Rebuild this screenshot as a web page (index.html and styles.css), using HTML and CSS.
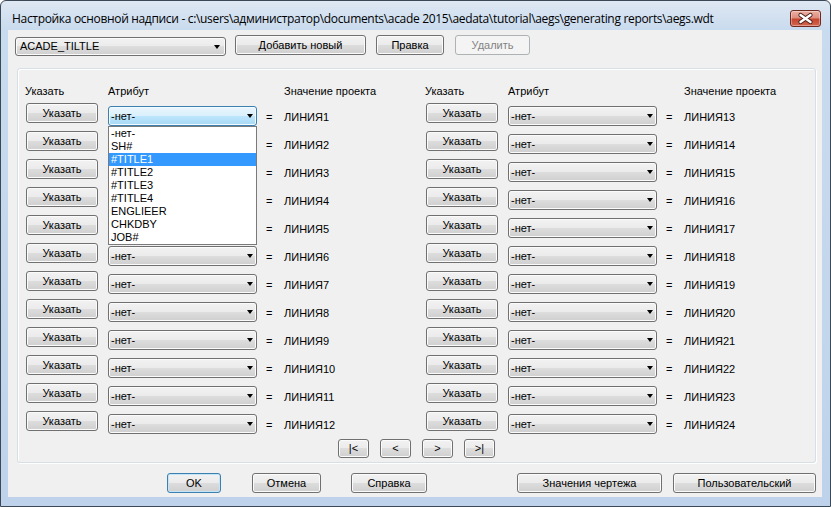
FILE: index.html
```html
<!DOCTYPE html>
<html lang="ru">
<head>
   <meta charset="utf-8">
   <title>Настройка основной надписи</title>
   <link rel="stylesheet" href="styles.css">
</head>
<body>

   <div class="window">
      <div class="titlebar">
         <span class="title">Настройка основной надписи - c:\users\администратор\documents\acade 2015\aedata\tutorial\aegs\generating reports\aegs.wdt</span>
         <div class="close">
            <svg width="29" height="15" viewBox="0 0 29 15">
               <path d="M9.5 4 L19.5 11 M19.5 4 L9.5 11" stroke="#4a1d18" stroke-width="4.2" stroke-linecap="round"/>
               <path d="M9.5 4 L19.5 11 M19.5 4 L9.5 11" stroke="#ffffff" stroke-width="2.4" stroke-linecap="round"/>
            </svg>
         </div>
      </div>

      <div class="client">
         <div class="toolbar">
            <div class="combo combo-main">ACADE_TILTLE</div>
            <button class="btn btn-add">Добавить новый</button>
            <button class="btn btn-edit">Правка</button>
            <button class="btn btn-del" disabled>Удалить</button>
         </div>

         <div class="group">
            <div class="panels">
               <div class="panel" id="left">
                  <div class="head head-pick">Указать</div>
                  <div class="head">Атрибут</div>
                  <div></div>
                  <div class="head">Значение проекта</div>
               </div>
               <div class="panel" id="right">
                  <div class="head head-pick">Указать</div>
                  <div class="head">Атрибут</div>
                  <div></div>
                  <div class="head">Значение проекта</div>
               </div>
            </div>
            <div class="nav">
               <button class="btn nav-btn">|&lt;</button>
               <button class="btn nav-btn">&lt;</button>
               <button class="btn nav-btn">&gt;</button>
               <button class="btn nav-btn">&gt;|</button>
            </div>
         </div>

         <div class="footer">
            <button class="btn btn-ok">OK</button>
            <button class="btn btn-cancel">Отмена</button>
            <button class="btn btn-help">Справка</button>
            <button class="btn btn-draw">Значения чертежа</button>
            <button class="btn btn-user">Пользовательский</button>
         </div>
      </div>
   </div>

   <script type="text/javascript">
      var items = ["-нет-", "SH#", "#TITLE1", "#TITLE2", "#TITLE3", "#TITLE4", "ENGLIEER", "CHKDBY", "JOB#"];

      function addRows(panel, from) {
         for (var i = 0; i < 12; i++) {
            var pick = document.createElement("button");
            pick.className = "btn pick";
            pick.textContent = "Указать";

            var combo = document.createElement("div");
            combo.className = "combo row-combo";
            // combos 2-5 on the left sit under the open list
            if (!(from === 1 && i > 0 && i < 5)) {
               combo.textContent = "-нет-";
            }

            var eq = document.createElement("div");
            eq.className = "eq";
            eq.textContent = "=";

            var val = document.createElement("div");
            val.className = "val";
            val.textContent = "ЛИНИЯ" + (from + i);

            if (from === 1 && i === 0) {
               combo.classList.add("open");
               var list = document.createElement("div");
               list.className = "list";
               items.forEach(function(t, k) {
                  var it = document.createElement("div");
                  it.className = k === 2 ? "item sel" : "item";
                  it.textContent = t;
                  list.appendChild(it);
               });
               combo.appendChild(list);
            }

            panel.appendChild(pick);
            panel.appendChild(combo);
            panel.appendChild(eq);
            panel.appendChild(val);
         }
      }

      addRows(document.getElementById("left"), 1);
      addRows(document.getElementById("right"), 13);
   </script>
</body>
</html>
```

FILE: styles.css
```css
body {
   margin: 0;
   font-family: "Liberation Sans", Arial, sans-serif;
   font-size: 11px;
   background: #ffffff;
}

.window {
   width: 831px;
   height: 507px;
   box-sizing: border-box;
   border: 1px solid #3b4856;
   border-radius: 6px 6px 0 0;
   background: linear-gradient(#dfe8f3 0, #c9dbee 28px, #bed3eb 100%);
   padding: 0 8px 9px 7px;
   display: flex;
   flex-direction: column;
}

.titlebar {
   height: 29px;
   display: flex;
   align-items: flex-start;
}

.title {
   font-family: "Open Sans", "Liberation Sans", sans-serif;
   font-size: 12px;
   line-height: 16px;
   margin: 10px 0 0 4px;
   color: #000;
   letter-spacing: -0.32px;
   white-space: nowrap;
}

.close {
   margin: 9px 1px 0 auto;
   width: 31px;
   height: 17px;
   box-sizing: border-box;
   border: 1px solid #6e2a21;
   border-radius: 3px;
   background: linear-gradient(#ebb0a3 0%, #dd8e7f 45%, #c6452f 55%, #d2674f 100%);
   box-shadow: inset 0 0 0 1px rgba(255, 255, 255, 0.35);
}

.close svg {
   display: block;
}

.client {
   flex: 1;
   background: #f0f0f0;
}

.toolbar {
   display: flex;
   align-items: flex-start;
   height: 25px;
   box-sizing: border-box;
   padding: 5px 0 0 7px;
}

.btn {
   box-sizing: border-box;
   height: 20px;
   padding: 0;
   border: 1px solid #707070;
   border-radius: 3px;
   background: linear-gradient(#f2f2f2 0%, #ebebeb 50%, #dddddd 50%, #cfcfcf 100%);
   box-shadow: inset 0 0 0 1px #fbfbfb;
   font-family: "Liberation Sans", Arial, sans-serif;
   font-size: 11px;
   line-height: 16px;
   color: #000;
   text-align: center;
}

.btn:disabled {
   border-color: #adb2b5;
   background: #f4f4f4;
   box-shadow: none;
   color: #838383;
}

.combo {
   position: relative;
   box-sizing: border-box;
   height: 20px;
   border: 1px solid #707070;
   border-radius: 3px;
   background: linear-gradient(#f2f2f2 0%, #ebebeb 50%, #dddddd 50%, #cfcfcf 100%);
   box-shadow: inset 0 0 0 1px #fbfbfb;
   padding-left: 2px;
   line-height: 18px;
   color: #000;
}

.combo::after {
   content: "";
   position: absolute;
   right: 3px;
   top: 7px;
   border-style: solid;
   border-width: 4px 3.5px 0;
   border-color: #000 transparent transparent;
}

.combo-main {
   width: 211px;
   height: 19px;
   line-height: 17px;
   margin-top: 2px;
   padding-left: 4px;
}

.combo-main::after {
   right: 5px;
}

.btn-add {
   width: 131px;
   margin-left: 9px;
}

.btn-edit {
   width: 68px;
   margin-left: 10px;
}

.btn-del {
   width: 75px;
   margin-left: 11px;
}

.group {
   width: 799px;
   height: 395px;
   box-sizing: border-box;
   margin: 13px 0 0 9px;
   border: 1px solid #d5dfe5;
   border-radius: 3px;
   box-shadow: inset 1px 1px 0 #ffffff, 1px 1px 0 #ffffff;
   padding: 16px 0 0 8px;
}

.panels {
   display: flex;
}

.panel {
   display: grid;
   grid-template-columns: 82px 149px 27px 1fr;
   grid-template-rows: 18px;
   grid-auto-rows: 28px;
   align-items: start;
   width: 400px;
   flex: none;
}

.head {
   line-height: 13px;
   color: #000;
}

.head-pick {
   margin-left: -1px;
}

.pick {
   width: 72px;
}

.row-combo {
   margin-top: 3px;
}

.eq,
.val {
   line-height: 13px;
   margin-top: 8px;
}

.eq {
   padding-left: 9px;
}

.combo.open {
   border-color: #3c7fb1;
   background: linear-gradient(#eaf6fd 0%, #d9f0fc 50%, #bee6fd 50%, #a7d9f5 100%);
   box-shadow: inset 0 0 0 1px #f4fbfe;
}

.list {
   position: absolute;
   top: 19px;
   left: -1px;
   width: 149px;
   box-sizing: border-box;
   border: 1px solid #7a7a7a;
   background: #ffffff;
   z-index: 10;
}

.item {
   height: 13px;
   line-height: 13px;
   padding-left: 2px;
   color: #000;
}

.item.sel {
   background: #3399ff;
   color: #ffffff;
}

.nav {
   display: flex;
   gap: 11px;
   margin-left: 312px;
}

.nav-btn {
   width: 31px;
   height: 19px;
   line-height: 15px;
}

.footer {
   display: flex;
   margin-top: 10px;
}

.footer .btn {
   height: 20px;
}

.btn-ok {
   width: 54px;
   margin-left: 159px;
   border-color: #3c7fb1;
   box-shadow: inset 0 0 0 1px #c4e5f6;
}

.btn-cancel {
   width: 69px;
   margin-left: 31px;
}

.btn-help {
   width: 76px;
   margin-left: 30px;
}

.btn-draw {
   width: 145px;
   margin-left: 90px;
}

.btn-user {
   width: 143px;
   margin-left: 11px;
}
```
